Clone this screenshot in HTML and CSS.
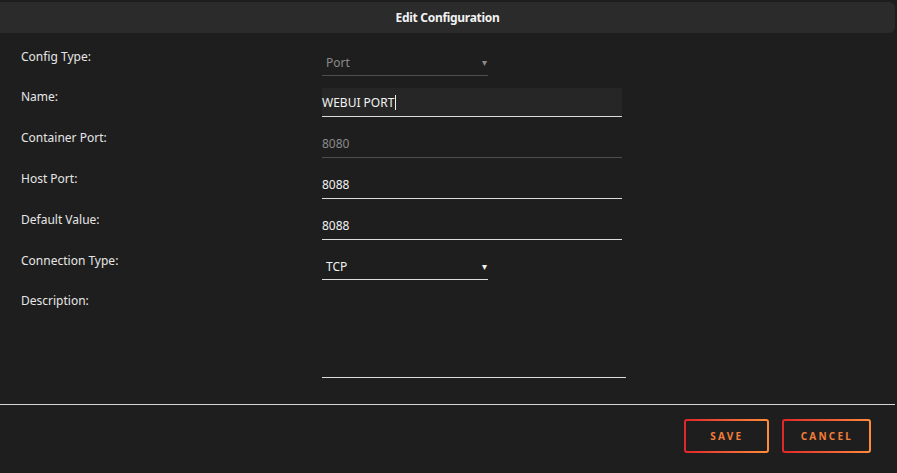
FILE: index.html
```html
<!DOCTYPE html>
<html>
<head>
  <meta charset="utf-8">
  <title>Edit Configuration</title>
  <link rel="stylesheet" href="styles.css">
</head>
<body>
  <div class="dialog">
    <div class="title">Edit Configuration</div>

    <div class="form">
      <div class="row">
        <div class="label">Config Type:</div>
        <div class="field select disabled"><span>Port</span><span class="arrow">&#9662;</span></div>
      </div>
      <div class="row">
        <div class="label">Name:</div>
        <div class="field text focused">WEBUI PORT<span class="caret"></span></div>
      </div>
      <div class="row">
        <div class="label">Container Port:</div>
        <div class="field text disabled">8080</div>
      </div>
      <div class="row">
        <div class="label">Host Port:</div>
        <div class="field text">8088</div>
      </div>
      <div class="row">
        <div class="label">Default Value:</div>
        <div class="field text">8088</div>
      </div>
      <div class="row">
        <div class="label">Connection Type:</div>
        <div class="field select"><span>TCP</span><span class="arrow">&#9662;</span></div>
      </div>
      <div class="row">
        <div class="label">Description:</div>
        <div class="field area"></div>
      </div>
    </div>

    <div class="footer">
      <button class="btn">SAVE</button>
      <button class="btn">CANCEL</button>
    </div>
  </div>
</body>
</html>
```

FILE: styles.css
```css
html, body {
  margin: 0;
  background-color: #1e1e1e;
}
body {
  font-family: "Noto Sans", "Open Sans", sans-serif;
  font-size: 12px;
  color: #e8e8e8;
  width: 897px;
  height: 473px;
  overflow: hidden;
}
.dialog {
  height: 472px;
  border-bottom: 1px solid #2c2c2c;
}
.title {
  margin: 2px 2px 0 0;
  height: 31px;
  line-height: 31px;
  background-color: #2b2b2b;
  border-radius: 0 6px 6px 0;
  text-align: center;
  font-weight: bold;
  font-size: 12px;
  letter-spacing: -0.3px;
  color: #f2f2f2;
}
.form {
  padding: 15px 0 0 21px;
  display: flex;
  flex-direction: column;
  gap: 12px;
}
.row {
  display: flex;
  align-items: flex-start;
}
.label {
  width: 301px;
  padding-top: 1px;
  line-height: 16px;
  color: #e6e6e6;
}
.field {
  height: 28px;
  line-height: 29px;
  border-bottom: 1px solid #dcdcdc;
  box-sizing: content-box;
  color: #f2f2f2;
}
.text {
  width: 300px;
}
.text.focused {
  background-color: #262626;
}
.text.disabled {
  color: #8a8a8a;
  border-bottom-color: #4e4e4e;
}
.caret {
  display: inline-block;
  width: 1px;
  height: 15px;
  margin-left: 1px;
  vertical-align: -3px;
  background-color: #f0f0f0;
}
.select {
  width: 166px;
  padding-left: 4px;
  box-sizing: border-box;
  display: flex;
  justify-content: space-between;
  padding-right: 1px;
}
.select.disabled {
  color: #8a8a8a;
  border-bottom-color: #4e4e4e;
}
.arrow {
  font-size: 10px;
  color: #f0f0f0;
}
.select.disabled .arrow {
  color: #8a8a8a;
}
.area {
  width: 304px;
  height: 85px;
}
.footer {
  margin-top: 26px;
  border-top: 1px solid #d6d6d6;
  margin-right: 2px;
  padding: 14px 24px 0 0;
  display: flex;
  justify-content: flex-end;
  gap: 13px;
}
.btn {
  height: 34px;
  min-width: 85px;
  padding: 0 16px 0 17px;
  border: 2px solid transparent;
  border-radius: 3px;
  background:
    linear-gradient(#1e1e1e, #1e1e1e) padding-box,
    linear-gradient(90deg, #e2262b, #ff8d3c) border-box;
  color: #f47c38;
  font-family: "Noto Sans", sans-serif;
  font-weight: bold;
  font-size: 10px;
  letter-spacing: 2.2px;
}
```
